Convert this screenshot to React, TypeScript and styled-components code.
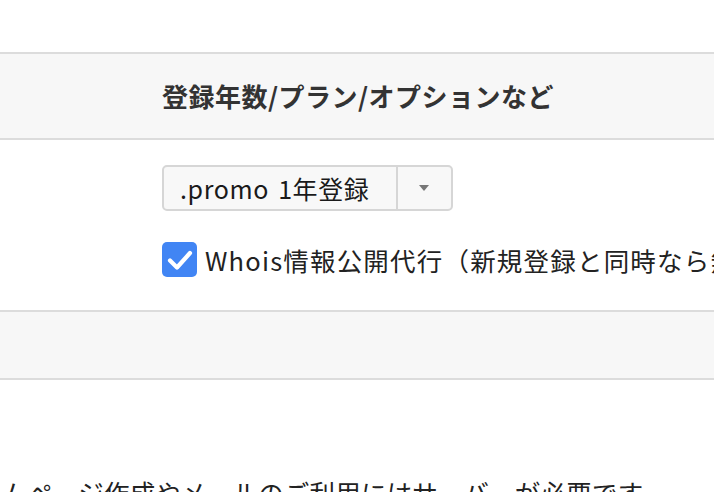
import React from "react";
import styled, { createGlobalStyle } from "styled-components";

const Global = createGlobalStyle`
  html, body {
    margin: 0;
    padding: 0;
    background: #ffffff;
    overflow: hidden;
  }
  body {
    font-family: "Noto Sans CJK JP", "Noto Sans", sans-serif;
    color: #222;
  }
`;

const Page = styled.div`
  width: 714px;
  height: 492px;
  overflow: hidden;
  padding-top: 52px;
  box-sizing: border-box;
`;

const Table = styled.div`
  border-top: 2px solid #dcdcdc;
`;

const Row = styled.div<{ $shade?: boolean; $h?: number }>`
  display: flex;
  flex-direction: column;
  align-items: flex-start;
  padding: 0 0 0 162px;
  background: ${(p) => (p.$shade ? "#f7f7f7" : "#ffffff")};
  border-bottom: 2px solid #dcdcdc;
  ${(p) => (p.$h ? `height: ${p.$h}px;` : "")}
  box-sizing: border-box;
`;

const HeadRow = styled(Row)`
  justify-content: center;
`;

const HeadText = styled.div`
  font-size: 26px;
  font-weight: 700;
  color: #333;
  white-space: nowrap;
  line-height: 1;
  letter-spacing: 0.5px;
`;

const BodyRow = styled(Row)`
  padding-top: 25px;
  padding-bottom: 33px;
  gap: 31px;
`;

const Select = styled.div`
  display: flex;
  align-items: stretch;
  height: 46px;
  width: 291px;
  box-sizing: border-box;
  border: 2px solid #d6d6d6;
  border-radius: 5px;
  background: #f8f8f8;
`;

const SelectValue = styled.div`
  flex: 1;
  display: flex;
  align-items: center;
  padding-left: 16px;
  font-size: 25px;
  letter-spacing: 0.6px;
  word-spacing: 3px;
  color: #1a1a1a;
  white-space: nowrap;
`;

const SelectArrow = styled.div`
  width: 53px;
  border-left: 2px solid #d6d6d6;
  display: flex;
  align-items: center;
  justify-content: center;
`;

const Triangle = styled.span`
  width: 0;
  height: 0;
  border-left: 5px solid transparent;
  border-right: 5px solid transparent;
  border-top: 6px solid #777;
  margin-left: -2px;
`;

const CheckLine = styled.label`
  display: flex;
  align-items: center;
  gap: 8px;
  white-space: nowrap;
  font-size: 25.5px;
  letter-spacing: 1.2px;
  color: #222;
  height: 35px;
`;

const CheckBox = styled.span`
  flex: none;
  width: 35px;
  height: 35px;
  border-radius: 5px;
  background: #4185f4;
  display: flex;
  align-items: center;
  justify-content: center;
`;

const Note = styled.div`
  margin-top: 92px;
  margin-left: -49px;
  font-size: 25.5px;
  letter-spacing: 0.2px;
  line-height: 40px;
  color: #222;
  white-space: nowrap;
`;

export default function App() {
  return (
    <>
      <Global />
      <Page>
        <Table>
          <HeadRow $shade $h={86}>
            <HeadText>登録年数/プラン/オプションなど</HeadText>
          </HeadRow>
          <BodyRow>
            <Select>
              <SelectValue>.promo 1年登録</SelectValue>
              <SelectArrow>
                <Triangle />
              </SelectArrow>
            </Select>
            <CheckLine>
              <CheckBox>
                <svg width="26" height="22" viewBox="0 0 26 22">
                  <path
                    d="M3 11.5 L10 18.5 L23 4"
                    fill="none"
                    stroke="#ffffff"
                    strokeWidth="4.2"
                    strokeLinecap="round"
                    strokeLinejoin="round"
                  />
                </svg>
              </CheckBox>
              <span>Whois情報公開代行（新規登録と同時なら無料）</span>
            </CheckLine>
          </BodyRow>
          <Row $shade $h={68} />
        </Table>
        <Note>ホームページ作成やメールのご利用にはサーバーが必要です。</Note>
      </Page>
    </>
  );
}
